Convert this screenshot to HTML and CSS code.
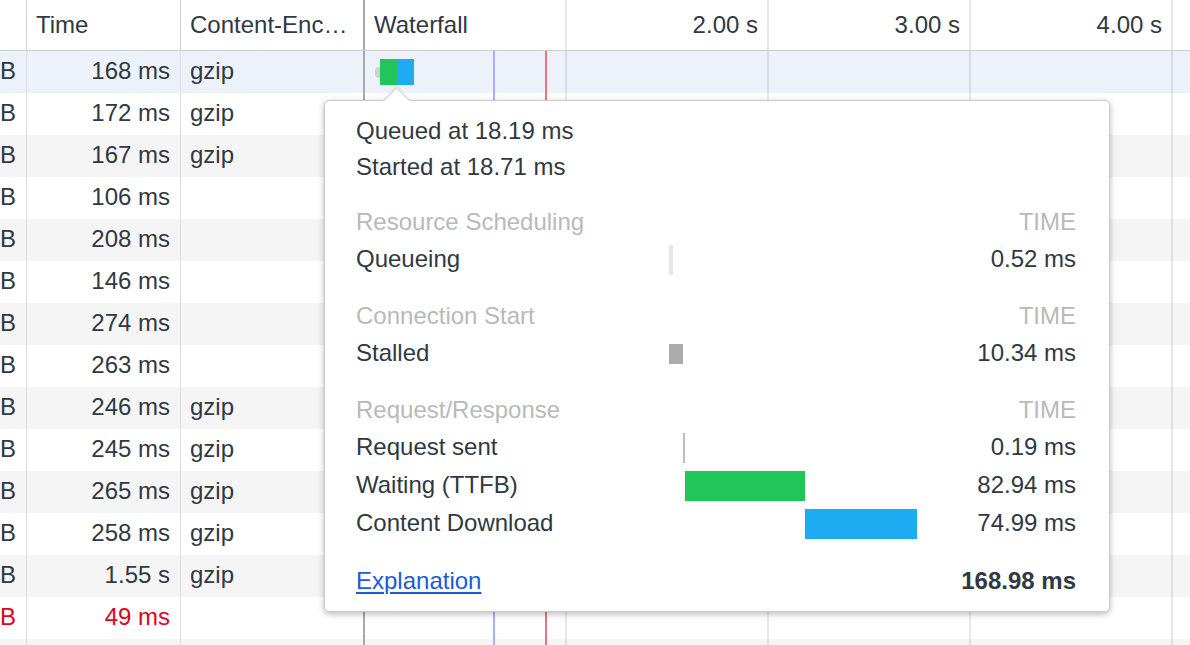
FILE: index.html
```html
<!DOCTYPE html>
<html>
<head>
<meta charset="utf-8">
<link rel="stylesheet" href="styles.css">
</head>
<body>
<div class="net">
  <div class="row head">
    <div class="c c1"></div>
    <div class="c c2">Time</div>
    <div class="c c3">Content-Enc…</div>
    <div class="c wf-head">
      <div class="div first">Waterfall</div>
      <div class="div">2.00 s</div>
      <div class="div">3.00 s</div>
      <div class="div">4.00 s</div>
      <div class="div last"></div>
    </div>
  </div>
  <div class="row sel">
    <div class="c c1"><span>KB</span></div><div class="c c2">168 ms</div><div class="c c3">gzip</div>
    <div class="c wf"><span class="pill"></span><span class="seg green"></span><span class="seg blue"></span></div>
  </div>
  <div class="row"><div class="c c1"><span>KB</span></div><div class="c c2">172 ms</div><div class="c c3">gzip</div><div class="c wf"></div></div>
  <div class="row alt"><div class="c c1"><span>KB</span></div><div class="c c2">167 ms</div><div class="c c3">gzip</div><div class="c wf"></div></div>
  <div class="row"><div class="c c1"><span>KB</span></div><div class="c c2">106 ms</div><div class="c c3"></div><div class="c wf"></div></div>
  <div class="row alt"><div class="c c1"><span>KB</span></div><div class="c c2">208 ms</div><div class="c c3"></div><div class="c wf"></div></div>
  <div class="row"><div class="c c1"><span>KB</span></div><div class="c c2">146 ms</div><div class="c c3"></div><div class="c wf"></div></div>
  <div class="row alt"><div class="c c1"><span>KB</span></div><div class="c c2">274 ms</div><div class="c c3"></div><div class="c wf"></div></div>
  <div class="row"><div class="c c1"><span>KB</span></div><div class="c c2">263 ms</div><div class="c c3"></div><div class="c wf"></div></div>
  <div class="row alt"><div class="c c1"><span>KB</span></div><div class="c c2">246 ms</div><div class="c c3">gzip</div><div class="c wf"></div></div>
  <div class="row"><div class="c c1"><span>KB</span></div><div class="c c2">245 ms</div><div class="c c3">gzip</div><div class="c wf"></div></div>
  <div class="row alt"><div class="c c1"><span>KB</span></div><div class="c c2">265 ms</div><div class="c c3">gzip</div><div class="c wf"></div></div>
  <div class="row"><div class="c c1"><span>KB</span></div><div class="c c2">258 ms</div><div class="c c3">gzip</div><div class="c wf"></div></div>
  <div class="row alt"><div class="c c1"><span>KB</span></div><div class="c c2">1.55 s</div><div class="c c3">gzip</div><div class="c wf"></div></div>
  <div class="row err"><div class="c c1"><span>KB</span></div><div class="c c2">49 ms</div><div class="c c3"></div><div class="c wf"></div></div>
  <div class="row alt"><div class="c c1"><span></span></div><div class="c c2"></div><div class="c c3"></div><div class="c wf"></div></div>

  <div class="popup">
    <div class="arrow"></div>
    <div class="top">
      <div>Queued at 18.19 ms</div>
      <div>Started at 18.71 ms</div>
    </div>
    <div class="sect">
      <div class="sh">Resource Scheduling</div><div></div><div class="sv sh">TIME</div>
      <div class="lbl">Queueing</div><div class="bar"><span class="b queue" style="margin-left:0;width:4px"></span></div><div class="sv">0.52 ms</div>
    </div>
    <div class="sect">
      <div class="sh">Connection Start</div><div></div><div class="sv sh">TIME</div>
      <div class="lbl">Stalled</div><div class="bar"><span class="b stall" style="margin-left:0;width:14px"></span></div><div class="sv">10.34 ms</div>
    </div>
    <div class="sect">
      <div class="sh">Request/Response</div><div></div><div class="sv sh">TIME</div>
      <div class="lbl">Request sent</div><div class="bar"><span class="b sent" style="margin-left:14px;width:2px"></span></div><div class="sv">0.19 ms</div>
      <div class="lbl">Waiting (TTFB)</div><div class="bar"><span class="b wait" style="margin-left:16px;width:120px"></span></div><div class="sv">82.94 ms</div>
      <div class="lbl">Content Download</div><div class="bar"><span class="b dl" style="margin-left:136px;width:112px"></span></div><div class="sv">74.99 ms</div>
    </div>
    <div class="sect foot">
      <div><a class="link" href="#">Explanation</a></div><div></div><div class="sv total">168.98 ms</div>
    </div>
  </div>
</div>
</body>
</html>
```

FILE: styles.css
```css
html, body {
  margin: 0;
  padding: 0;
}
body {
  width: 1190px;
  height: 645px;
  overflow: hidden;
  background: #fff;
  font-family: "Liberation Sans", Arial, sans-serif;
  font-size: 24px;
  color: #303942;
}
.net {
  position: relative;
  width: 1190px;
  height: 645px;
  overflow: hidden;
}
.row {
  display: grid;
  grid-template-columns: 27px 154px 184px 1fr;
  height: 42px;
  background: #fff;
}
.row.alt { background: #f5f5f5; }
.row.sel { background: #edf1f9; }
.row.err { color: #e3001b; }
.row.head {
  height: 51px;
  border-bottom: 1px solid #cdcdcd;
  box-sizing: border-box;
}
.c {
  box-sizing: border-box;
  display: flex;
  align-items: center;
  white-space: nowrap;
  overflow: hidden;
  padding-bottom: 2px;
}
.head .c { padding-bottom: 0; }
.c1 {
  justify-content: flex-end;
  padding-right: 10px;
  border-right: 1px solid #dcdcdc;
}
.c2 {
  justify-content: flex-end;
  padding-right: 10px;
  border-right: 1px solid #dcdcdc;
}
.c3 {
  padding-left: 9px;
  border-right: 2px solid #a9a9a9;
}
.head .c1, .head .c2 { border-right-color: #cfcfcf; }
.head .c2 {
  justify-content: flex-start;
  padding-left: 9px;
}
.wf-head {
  display: grid;
  grid-template-columns: repeat(4, 202px) 1fr;
  align-items: stretch;
}
.div {
  box-sizing: border-box;
  display: flex;
  align-items: center;
  justify-content: flex-end;
  padding-right: 9px;
  border-right: 2px solid #e8e8e8;
}
.div.first {
  justify-content: flex-start;
  padding-left: 9px;
}
.div.last { border-right: 0; }
.wf {
  padding-left: 10px;
  padding-bottom: 0;
  background-image:
    linear-gradient(to right, transparent 128px, #a9aef8 128px, #a9aef8 130px, transparent 130px),
    linear-gradient(to right, transparent 180px, #ef7378 180px, #ef7378 182px, transparent 182px),
    repeating-linear-gradient(to right, transparent 0, transparent 200px, rgba(0,0,0,0.09) 200px, rgba(0,0,0,0.09) 202px);
}
.pill {
  width: 5px;
  height: 11px;
  background: #d2d2d2;
  border-radius: 4px 0 0 4px;
}
.seg {
  height: 26px;
}
.seg.green { width: 18px; background: #21c65a; }
.seg.blue { width: 16px; background: #1eabf2; }

/* popup */
.popup {
  position: absolute;
  left: 324px;
  top: 100px;
  width: 786px;
  box-sizing: border-box;
  background: #fff;
  border: 1px solid #cbcbcb;
  border-radius: 5px;
  box-shadow: 0 2px 6px rgba(0,0,0,0.28);
  padding: 12px 33px 12px 31px;
}
.arrow {
  position: absolute;
  left: 62px;
  top: -10px;
  width: 18px;
  height: 18px;
  background: #fff;
  border-top: 1px solid #d0d0d0;
  border-left: 1px solid #d0d0d0;
  transform: rotate(45deg);
  box-shadow: -1px -1px 2px rgba(0,0,0,0.06);
}
.top {
  line-height: 36px;
}
.sect {
  display: grid;
  grid-template-columns: 313px 250px 1fr;
  grid-auto-rows: 38px;
  align-items: center;
  margin-top: 18px;
}
.lbl, .sv { padding-bottom: 2px; }
.sh { padding-bottom: 0; color: #b9b9b9; }
.foot .sv, .foot > div:first-child { padding-bottom: 0; padding-top: 1px; }
.sv { text-align: right; }
.bar {
  display: flex;
  align-items: center;
  height: 38px;
}
.b { display: block; height: 30px; }
.b.queue { background: #e6e6e6; }
.b.stall { background: #ababab; height: 20px; }
.b.sent { background: #b1bfcb; }
.b.wait { background: #21c65a; }
.b.dl { background: #1eabf2; }
.link {
  color: #1c5bd3;
  text-decoration: underline;
  text-decoration-thickness: 2px;
  text-underline-offset: 3px;
}
.total { font-weight: bold; }
```
